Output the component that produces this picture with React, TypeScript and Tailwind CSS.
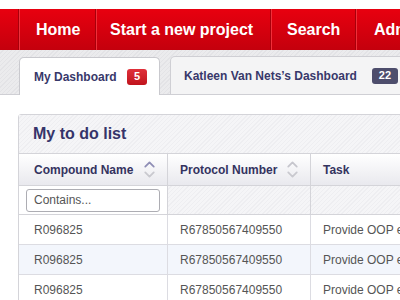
import { ChevronUp, ChevronDown } from "lucide-react";

const rows = [
  { compound: "R096825", protocol: "R67850567409550", task: "Provide OOP estimate", alt: false },
  { compound: "R096825", protocol: "R67850567409550", task: "Provide OOP estimate", alt: true },
  { compound: "R096825", protocol: "R67850567409550", task: "Provide OOP estimate", alt: false },
];

function SortIcon({ active }: { active?: boolean }) {
  return (
    <span className="flex flex-col items-center leading-none">
      <ChevronUp size={17} strokeWidth={2.5} className={active ? "text-[#8f8eb6] -mb-[7px]" : "text-[#c6c6cd] -mb-[7px]"} />
      <ChevronDown size={17} strokeWidth={2.5} className="text-[#c9c9cf]" />
    </span>
  );
}

export default function App() {
  const hatch =
    "bg-[repeating-linear-gradient(135deg,#f5f5f7_0px,#f5f5f7_2px,#eeeef1_2px,#eeeef1_3px)]";
  const barHatch =
    "bg-[repeating-linear-gradient(135deg,#ebebed_0px,#ebebed_2px,#e3e3e6_2px,#e3e3e6_3px)]";

  return (
    <div className="w-[400px] h-[300px] overflow-hidden bg-white font-['Liberation_Sans',Arial,sans-serif]">
      <div className="w-[700px]">
        {/* Top nav */}
        <div className="mt-[9px] h-[41px] flex bg-gradient-to-b from-[#e8000f] to-[#c4000d] text-white font-bold text-[16px] whitespace-nowrap">
          <div className="w-[18px]" />
          <div className="flex items-center pl-[17px] w-[77px] border-l border-[#a8000b] shadow-[inset_1px_0_0_#f0303a]">Home</div>
          <div className="flex items-center pl-[14px] w-[175px] border-l border-[#a8000b] shadow-[inset_1px_0_0_#f0303a]">Start a new project</div>
          <div className="flex items-center pl-[16px] w-[85px] border-l border-[#a8000b] shadow-[inset_1px_0_0_#f0303a]">Search</div>
          <div className="flex items-center pl-[18px] w-[150px] border-l border-[#a8000b] shadow-[inset_1px_0_0_#f0303a]">Administration</div>
        </div>

        {/* Tabs bar */}
        <div className={`h-[45px] flex items-end gap-[10px] pl-[19px] border-b border-[#cfcfd4] whitespace-nowrap ${barHatch}`}>
          <div className="h-[38px] -mb-px w-[141px] bg-white border border-b-0 border-[#c9c9ce] rounded-t-[5px] flex items-center justify-between pl-[14px] pr-[12px]">
            <span className="text-[12px] font-bold text-[#38386a]">My Dashboard</span>
            <span className="w-[20px] h-[16px] rounded-[3px] bg-gradient-to-b from-[#e0303a] to-[#c0121c] text-white text-[11px] font-bold flex items-center justify-center">5</span>
          </div>
          <div className="h-[38px] bg-[#f4f4f5] border border-b-0 border-[#cfcfd4] rounded-t-[5px] flex items-center pl-[13px] pr-[14px] gap-[15px]">
            <span className="text-[12px] font-bold text-[#38386a]">Katleen Van Nets’s Dashboard</span>
            <span className="w-[26px] h-[16px] rounded-[3px] bg-[#4d4d6c] text-white text-[11px] font-bold flex items-center justify-center">22</span>
          </div>
        </div>

        {/* Panel */}
        <div className="mt-[19px] ml-[18px] border border-[#d4d4d9] rounded-tl-[3px] whitespace-nowrap">
          <div className={`h-[39px] flex items-center pl-[14px] border-b border-[#d4d4d9] ${hatch}`}>
            <span className="text-[16px] font-bold text-[#35346a]">My to do list</span>
          </div>

          <div className="grid grid-cols-[149px_143px_1fr]">
            {/* header */}
            <div className="h-[32px] flex items-center justify-between pl-[15px] pr-[9px] border-r border-b border-[#d4d4d9] bg-gradient-to-b from-white to-[#e9e9ee]">
              <span className="text-[12px] font-bold text-[#34335f]">Compound Name</span>
              <SortIcon active />
            </div>
            <div className="h-[32px] flex items-center justify-between pl-[12px] pr-[9px] border-r border-b border-[#d4d4d9] bg-gradient-to-b from-white to-[#e9e9ee]">
              <span className="text-[12px] font-bold text-[#34335f]">Protocol Number</span>
              <SortIcon />
            </div>
            <div className="h-[32px] flex items-center pl-[12px] border-b border-[#d4d4d9] bg-gradient-to-b from-white to-[#e9e9ee]">
              <span className="text-[12px] font-bold text-[#34335f]">Task</span>
            </div>

            {/* filter row */}
            <div className="h-[29px] flex items-center pl-[7px] pr-[7px] border-r border-b border-[#d4d4d9] bg-white">
              <div className="w-full h-[23px] border border-[#adadb3] rounded-[3px] flex items-center pl-[7px] text-[12px] text-[#555]">
                Contains...
              </div>
            </div>
            <div className={`h-[29px] border-r border-b border-[#d4d4d9] ${hatch}`} />
            <div className={`h-[29px] border-b border-[#d4d4d9] ${hatch}`} />

            {rows.map((r, i) => (
              <div key={i} className="contents">
                <div className={`h-[30px] flex items-center pl-[15px] border-r border-b border-[#dcdce2] text-[12px] text-[#555] ${r.alt ? "bg-[#f3f6fc]" : "bg-white"}`}>
                  {r.compound}
                </div>
                <div className={`h-[30px] flex items-center pl-[12px] border-r border-b border-[#dcdce2] text-[12px] text-[#555] ${r.alt ? "bg-[#f3f6fc]" : "bg-white"}`}>
                  {r.protocol}
                </div>
                <div className={`h-[30px] flex items-center pl-[12px] border-b border-[#dcdce2] text-[12px] text-[#555] ${r.alt ? "bg-[#f3f6fc]" : "bg-white"}`}>
                  {r.task}
                </div>
              </div>
            ))}
          </div>
        </div>
      </div>
    </div>
  );
}
